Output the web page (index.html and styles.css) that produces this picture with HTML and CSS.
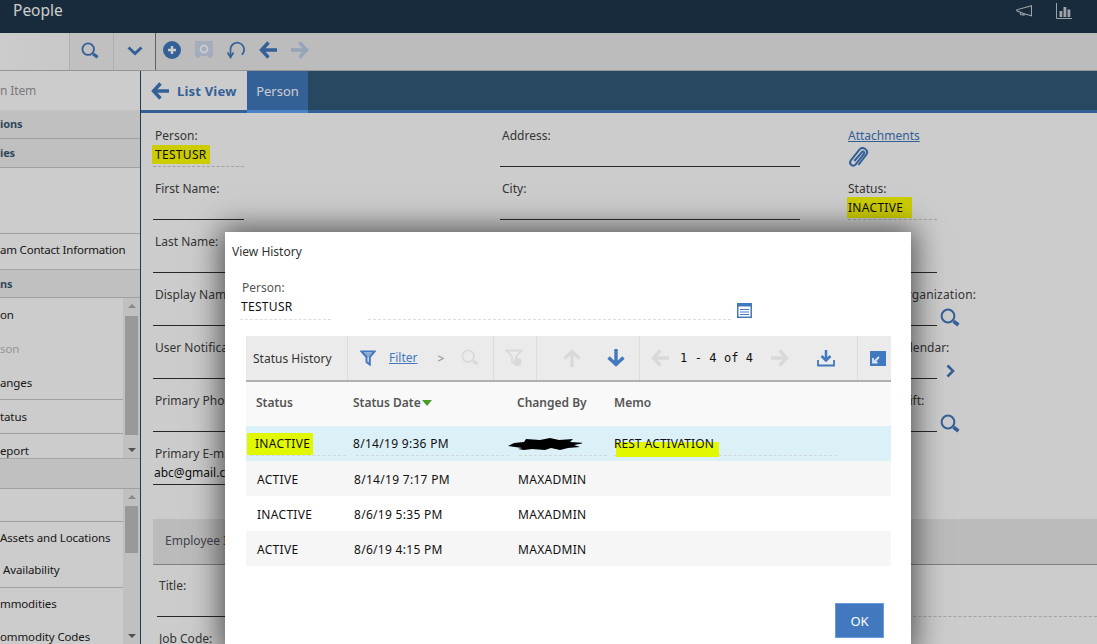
FILE: index.html
```html
<!DOCTYPE html>
<html lang="en">
<head>
<meta charset="utf-8">
<title>People</title>
<link rel="stylesheet" href="styles.css">
</head>
<body>
<svg class="defs" width="0" height="0" aria-hidden="true">
  <symbol id="i-search" viewBox="0 0 20 20"><circle cx="8" cy="8" r="6.400" fill="none" stroke="currentColor" stroke-width="2"/><path d="M13.500 13.300l5 3.700" fill="none" stroke="currentColor" stroke-width="3.600"/></symbol>
  <symbol id="i-left" viewBox="0 0 18 18"><path d="M9.500 1.500L2.500 9l7 7.500M3 9h15" fill="none" stroke="currentColor" stroke-width="3.400"/></symbol>
  <symbol id="i-right" viewBox="0 0 18 18"><path d="M8.500 1.500l7 7.500-7 7.500M15 9H0" fill="none" stroke="currentColor" stroke-width="3.400"/></symbol>
  <symbol id="i-up" viewBox="0 0 18 18"><path d="M1.500 9.500l7.500-7 7.500 7M9 3v15" fill="none" stroke="currentColor" stroke-width="3.400"/></symbol>
  <symbol id="i-down" viewBox="0 0 18 18"><path d="M1.500 8.500l7.500 7 7.500-7M9 15V0" fill="none" stroke="currentColor" stroke-width="3.400"/></symbol>
  <symbol id="i-filter" viewBox="0 0 16 16"><path d="M1.500 1.500h13L9.800 7v7.500L6.500 12V7z" fill="none" stroke="currentColor" stroke-width="2"/><path d="M4 3h8L9 7H7z" fill="currentColor" opacity=".55"/></symbol>
</svg>

<div class="page">
  <header class="topbar">
    <span class="app-title">People</span>
    <div class="top-icons">
      <svg class="top-icon" width="16" height="12" viewBox="0 0 16 12"><path d="M15.500.8v10L8 8.800.8 5.800v-1z M4 7l.5 2.500 3.500.6.300-2" fill="none" stroke="currentColor" stroke-width="1.100"/></svg>
      <svg class="top-icon" width="16" height="16" viewBox="0 0 16 16"><path d="M.5 0v15.500H16" fill="none" stroke="currentColor"/><path d="M3.500 8h2.800v6H3.500zM7.500 4h2.800v10H7.500zM11.500 6.500h2.800V14h-2.800z" fill="currentColor"/></svg>
    </div>
  </header>

  <div class="toolbar">
    <div class="tb-field"></div>
    <div class="tb-cell tb-search"><svg class="ic18"><use href="#i-search"/></svg></div>
    <div class="tb-cell tb-last"><svg width="16" height="10" viewBox="0 0 16 10" class="blue"><path d="M1.500 1.500L8 7.500l6.500-6" fill="none" stroke="currentColor" stroke-width="3"/></svg></div>
    <div class="tb-actions">
      <svg width="18" height="18" viewBox="0 0 18 18" class="blue"><circle cx="9" cy="9" r="9" fill="currentColor"/><path d="M9 5v8M5 9h8" stroke="#fff" stroke-width="2.400"/></svg>
      <svg width="18" height="18" viewBox="0 0 18 18" class="faded"><path d="M0 0h18v15l-2 2h-2l-1-2H5l-1 2H2l-2-2z" fill="currentColor"/><circle cx="9" cy="8" r="3.500" fill="none" stroke="#fff" stroke-width="1.800"/></svg>
      <svg width="18" height="18" viewBox="0 0 18 18" class="blue"><path d="M3.500 15V8.500a6.800 6.800 0 1 1 12.500 3.700c-.3.500-.7 1-1.200 1.400" fill="none" stroke="currentColor" stroke-width="1.700"/><path d="M.5 11.500l3 4.800 3-4.800" fill="none" stroke="currentColor" stroke-width="1.700"/></svg>
      <svg class="ic18 blue"><use href="#i-left"/></svg>
      <svg class="ic18 faded-arrow"><use href="#i-right"/></svg>
    </div>
  </div>

  <div class="main">
    <aside class="sidebar">
      <div class="side-top">n Item</div>
      <div class="band">ions</div>
      <div class="band">ies</div>
      <div class="side-plain">
        <div class="side-spacer"></div>
        <div class="side-row">am Contact Information</div>
      </div>
      <div class="band band-a">ns</div>
      <div class="side-scroll side-scroll-a">
        <ul class="side-list">
          <li class="row34">on</li>
          <li class="row34 disabled">son</li>
          <li class="row34 sep">anges</li>
          <li class="row34 sep">tatus</li>
          <li class="row34">eport</li>
        </ul>
        <div class="scrollbar">
          <span class="arrow-up"></span>
          <span class="thumb thumb-a"></span>
          <span class="arrow-down"></span>
        </div>
      </div>
      <div class="band band-b"></div>
      <div class="side-scroll side-scroll-b">
        <ul class="side-list">
          <li class="row33 sep"></li>
          <li class="row33">Assets and Locations</li>
          <li class="row33 sep indent">Availability</li>
          <li class="row33">mmodities</li>
          <li class="row33">ommodity Codes</li>
        </ul>
        <div class="scrollbar">
          <span class="arrow-up"></span>
          <span class="thumb thumb-b"></span>
          <span class="arrow-down"></span>
        </div>
      </div>
    </aside>

    <section class="content">
      <nav class="tabs">
        <a class="tab-list"><svg class="ic18 blue"><use href="#i-left"/></svg><span>List View</span></a>
        <a class="tab-person">Person</a>
      </nav>
      <div class="form">
        <div class="col col-1">
          <div class="field dashed"><label>Person:</label><div class="value"><mark>TESTUSR</mark></div></div>
          <div class="field"><label>First Name:</label><div class="value"></div></div>
          <div class="field"><label>Last Name:</label><div class="value"></div></div>
          <div class="field"><label>Display Name:</label><div class="value"></div></div>
          <div class="field"><label>User Notification:</label><div class="value"></div></div>
          <div class="field"><label>Primary Phone:</label><div class="value"></div></div>
          <div class="field"><label>Primary E-mail:</label><div class="value">abc@gmail.com</div></div>
        </div>
        <div class="col col-2">
          <div class="field"><label>Address:</label><div class="value"></div></div>
          <div class="field"><label>City:</label><div class="value"></div></div>
        </div>
        <div class="col col-3">
          <div class="attach">
            <a class="link">Attachments</a>
            <svg class="clip" width="20" height="20" viewBox="3 2 15 15"><path d="M7 12.500l5.500-6.500c1-1.200 2.600-.2 1.700 1.200L8 15c-2 2.400-5.500-.3-3.600-3l6.400-8c2.500-3 7.500.3 5.200 3.800L10 15.500" fill="none" stroke="currentColor" stroke-width="1.500"/></svg>
          </div>
          <div class="field dashed"><label>Status:</label><div class="value"><mark class="mark-status">INACTIVE</mark></div></div>
          <div class="field"><label>Type:</label><div class="value"></div></div>
          <div class="field with-icon"><label class="label-wide">Primary Organization:</label><div class="value"></div><svg class="field-icon"><use href="#i-search"/></svg></div>
          <div class="field with-icon"><label>Primary Calendar:</label><div class="value"></div><svg class="field-chev" width="9" height="14" viewBox="0 0 9 14"><path d="M1.500 1.500L7 7l-5.500 5.500" fill="none" stroke="currentColor" stroke-width="2.600"/></svg></div>
          <div class="field with-icon"><label>Primary Shift:</label><div class="value"></div><svg class="field-icon"><use href="#i-search"/></svg></div>
        </div>
      </div>
      <div class="employee">
        <div class="employee-band">Employee I</div>
        <div class="employee-body">
          <div class="employee-col">
            <div class="field"><label>Title:</label><div class="value"></div></div>
            <div class="field"><label>Job Code:</label><div class="value"></div></div>
          </div>
          <div class="employee-col">
            <div class="field dashed"><label></label><div class="value"></div></div>
          </div>
        </div>
      </div>
    </section>
  </div>

  <div class="scrim"></div>

  <div class="modal" role="dialog">
    <div class="modal-title">View History</div>
    <div class="modal-person">
      <div class="mp-field">
        <label>Person:</label>
        <div class="mp-value">TESTUSR</div>
      </div>
      <div class="mp-desc"></div>
      <svg class="cal" width="15" height="15" viewBox="0 0 15 15"><rect x=".75" y=".75" width="13.500" height="13.500" fill="#fff" stroke="#4178be" stroke-width="1.500"/><path d="M0 0h15v3.500H0z" fill="#4178be"/><path d="M3 6.500h9M3 9h9M3 11.500h9" stroke="#4178be"/></svg>
    </div>

    <div class="history">
      <div class="h-toolbar">
        <div class="ht-title">Status History</div>
        <div class="ht-filter">
          <svg class="ic16 blue"><use href="#i-filter"/></svg>
          <a class="link">Filter</a>
          <span class="ht-gt">&gt;</span>
          <svg class="ic18 off"><use href="#i-search"/></svg>
        </div>
        <div class="ht-clear">
          <svg width="18" height="18" viewBox="0 0 18 18" class="off"><path d="M1.500 1.500h15L11 7.500v8L7 13V7.500z" fill="none" stroke="currentColor" stroke-width="1.800"/><circle cx="12.500" cy="13" r="4" fill="currentColor"/></svg>
        </div>
        <div class="ht-sort">
          <svg class="ic18 off"><use href="#i-up"/></svg>
          <svg class="ic18 blue"><use href="#i-down"/></svg>
        </div>
        <div class="ht-page">
          <svg class="ic18 off"><use href="#i-left"/></svg>
          <span class="ht-count">1 - 4 of 4</span>
          <svg class="ic18 off"><use href="#i-right"/></svg>
          <svg class="ht-dl blue" width="18" height="18" viewBox="0 0 18 18"><path d="M9 1v10M4.500 7L9 11.500 13.500 7" fill="none" stroke="currentColor" stroke-width="2.500"/><path d="M1 11v5.500h16V11" fill="none" stroke="currentColor" stroke-width="1.800"/></svg>
        </div>
        <div class="ht-restore">
          <svg width="16" height="15" viewBox="0 0 16 15"><rect width="16" height="15" fill="#4178be"/><path d="M9 6L4 11M3 7v4.500h4.500" fill="none" stroke="#dbe6f4" stroke-width="1.800"/></svg>
        </div>
      </div>

      <div class="h-grid h-head">
        <div>Status</div>
        <div>Status Date<span class="sort-mark"></span></div>
        <div>Changed By</div>
        <div>Memo</div>
      </div>
      <div class="h-grid h-row h-selected">
        <div class="c-dash"><mark class="hl-bright">INACTIVE</mark></div>
        <div class="c-dash">8/14/19 9:36 PM</div>
        <div class="c-dash"><svg class="redact" width="74" height="15" viewBox="0 0 74 15"><path d="M0 10l6-3 10-1 2-3 14 1 10-2 9 2 14-1-3 3 14 1-10 2 6 2-12 1-8 2-9-2-6 2-13-1-8 1-6-1 4-1z" fill="#000"/></svg></div>
        <div class="c-dash c-memo"><mark class="hl-low">REST ACTIVATION</mark></div>
      </div>
      <div class="h-grid h-row h-alt h-plain">
        <div>ACTIVE</div><div>8/14/19 7:17 PM</div><div>MAXADMIN</div><div></div>
      </div>
      <div class="h-grid h-row h-plain">
        <div>INACTIVE</div><div>8/6/19 5:35 PM</div><div>MAXADMIN</div><div></div>
      </div>
      <div class="h-grid h-row h-alt h-plain">
        <div>ACTIVE</div><div>8/6/19 4:15 PM</div><div>MAXADMIN</div><div></div>
      </div>
    </div>

    <div class="modal-foot"><button class="ok" type="button">OK</button></div>
  </div>
</div>
</body>
</html>
```
FILE: styles.css
```css
* { box-sizing: border-box; }
html, body { margin: 0; padding: 0; }
body { font-family: "Noto Sans", "Open Sans", sans-serif; font-size: 12px; color: #222; background: #fff; }
.defs { position: absolute; }
.page { position: relative; width: 1097px; height: 644px; overflow: hidden; display: flex; flex-direction: column; }
.ic18 { width: 18px; height: 18px; }
.ic16 { width: 16px; height: 16px; }
.blue, .ic18, .clip, .field-chev, .field-icon { color: #4178be; }
.off.off { color: #d9d9d9; }
.faded { color: #ccd9ee; }
.ic18.faded-arrow { color: #b9cde8; }

/* top bar */
.topbar { height: 33px; flex: none; background: #1e364b; display: flex; align-items: flex-start; justify-content: space-between; padding: 0 25px 0 13px; }
.app-title { font-size: 15.500px; line-height: 20px; color: #fff; }
.top-icons { display: flex; gap: 24px; align-items: center; height: 17px; margin-top: 2px; }
.top-icon { color: #c8cdd2; }

/* tool bar */
.toolbar { height: 38px; flex: none; background: #ebebeb; border-bottom: 1px solid #bbb; display: flex; align-items: stretch; }
.tb-field { width: 69px; background: linear-gradient(90deg, #fff, #fafafa); }
.tb-cell { width: 44px; display: flex; align-items: center; justify-content: center; background: #f0f0f0; border-left: 1px solid #dadada; padding-bottom: 2px; }
.tb-search { padding-right: 4px; }
.tb-last { width: 43px; border-right: 1px solid #7a7a7a; }
.tb-actions { display: flex; align-items: center; gap: 14px; padding: 0 0 3px 7px; }

/* main */
.main { flex: 1; display: flex; min-height: 0; }
.sidebar { width: 141px; flex: none; border-right: 1px solid #2a4a66; display: flex; flex-direction: column; overflow: hidden; line-height: 16px; font-size: 11.500px; letter-spacing: -.12px; }
.side-top { height: 40px; display: flex; align-items: center; color: #999; font-size: 12px; }
.band { height: 29px; flex: none; background: #f0f0f0; border-bottom: 1px solid #c8c8c8; display: flex; align-items: center; font-weight: 700; color: #3d5a74; font-size: 11px; }
.side-plain { height: 101px; flex: none; }
.side-spacer { height: 66px; border-bottom: 1px solid #c8c8c8; }
.side-row { height: 32px; display: flex; align-items: center; letter-spacing: -.2px; }
.band-a { height: 29px; border-top: 1px solid #d0d0d0; }
.band-b { height: 31px; border-top: 1px solid #d0d0d0; }
.side-scroll { display: flex; flex: none; overflow: hidden; }
.side-scroll-a { height: 160px; }
.side-scroll-b { height: 155px; }
.side-list { list-style: none; margin: 0; padding: 0; flex: 1; min-width: 0; }
.side-list li { display: flex; align-items: center; white-space: nowrap; }
.row34 { height: 34px; }
.row33 { height: 33px; padding-bottom: 2px; }
.sep { border-bottom: 1px solid #c8c8c8; }
.indent { padding-left: 3px; }
.disabled { color: #bbb; }
.scrollbar { width: 17px; flex: none; background: #f0f0f0; position: relative; display: flex; flex-direction: column; align-items: center; padding: 6px 0; }
.arrow-up, .arrow-down { flex: none; width: 0; height: 0; border-left: 4px solid transparent; border-right: 4px solid transparent; }
.arrow-up { border-bottom: 4px solid #aaa; }
.arrow-down { border-top: 4px solid #666; margin-top: auto; }
.thumb { width: 13px; background: #c0c0c0; flex: none; }
.thumb-a { height: 119px; margin-top: 8px; }
.thumb-b { height: 47px; margin-top: 7px; }

/* content */
.content { flex: 1; min-width: 0; display: flex; flex-direction: column; }
.tabs { height: 42px; flex: none; background: #325a7a; border-bottom: 3px solid #4178be; display: flex; }
.tab-list { width: 106px; background: #fff; margin-bottom: -3px; border-bottom: 3px solid #4178be; display: flex; align-items: center; gap: 8px; padding: 0 0 0 10px; color: #4178be; font-weight: 700; font-size: 13px; letter-spacing: .2px; }
.tab-person { width: 61px; background: #4178be; margin-bottom: -3px; border-bottom: 3px solid #5da5f5; display: flex; align-items: center; justify-content: center; color: #fff; font-size: 13px; }
.form { display: flex; padding: 15px 0 0 12px; height: 406px; flex: none; }
.col { display: flex; flex-direction: column; }
.col-1 { width: 347px; }
.col-1 .value { width: 91px; }
.col-2 { width: 348px; }
.col-2 .value { width: 300px; }
.col-3 .value { width: 89px; }
.field { height: 53px; flex: none; position: relative; }
.field label { display: block; height: 17px; line-height: 16px; padding-left: 2px; color: #444; white-space: nowrap; }
.col-3 .field label { padding-left: 0; }
.col-3 .field .label-wide { letter-spacing: .2px; }
.value { height: 22px; line-height: 20px; border-bottom: 1px solid #333; color: #111; white-space: nowrap; padding-left: 1px; overflow: visible; }
.dashed .value { border-bottom: 1px dashed #ccc; }
mark { background: #ff0; color: #111; padding: 1px 3px; margin-left: -2px; letter-spacing: .3px; }
.col-3 .value { padding-left: 0; }
.mark-status { margin-left: -1px; padding: 2px 9px 2px 1px; }
.attach { height: 53px; flex: none; display: flex; flex-direction: column; align-items: flex-start; gap: 3px; }
.link { color: #4178be; text-decoration: underline; line-height: 16px; }
.clip { margin-left: 1px; }
.field-icon { position: absolute; left: 92px; top: 21px; width: 20px; height: 20px; }
.field-chev { position: absolute; left: 98px; top: 24px; }
.employee { padding-left: 12px; }
.employee-band { height: 46px; background: #eaeaea; border-bottom: 1px solid #9f9f9f; display: flex; align-items: center; padding: 0 0 2px 12px; color: #556; }
.employee-body { padding: 13px 0 0 4px; display: flex; gap: 30px; }
.employee-col { flex: none; width: 310px; }
.employee-col + .employee-col { width: 620px; }
.employee-col .value { width: 100%; }

/* overlay */
.scrim { position: absolute; inset: 0; background: rgba(0, 0, 0, .2); }
.modal { position: absolute; left: 225px; top: 232px; width: 686px; height: 420px; background: #fff; box-shadow: 0 0 28px 4px rgba(0, 0, 0, .6); padding: 0 20px 0 21px; }
.modal-title { height: 39px; line-height: 39px; margin-left: -14px; color: #333; }
.modal-person { display: flex; align-items: flex-end; height: 49px; margin-left: -6px; }
.mp-field { width: 91px; border-bottom: 1px dashed #ddd; height: 42px; }
.mp-field label { display: block; height: 19px; line-height: 19px; padding-left: 2px; color: #555; }
.mp-value { line-height: 20px; padding-left: 1px; color: #111; letter-spacing: .3px; }
.mp-desc { width: 363px; margin-left: 37px; border-bottom: 1px dashed #ddd; }
.cal { margin: 0 0 0 6px; position: relative; top: -2px; }
.history { margin-top: 16px; width: 645px; }
.h-toolbar { height: 46px; background: #ebebeb; border-bottom: 2px solid #b0b0b0; display: flex; align-items: stretch; }
.h-toolbar > div { display: flex; align-items: center; border-right: 1px solid #dcdcdc; }
.ht-title { width: 102px; padding-left: 7px; color: #333; }
.ht-filter { width: 146px; padding-left: 12px; gap: 13px; }
.ht-gt { color: #888; margin: 0 4px 0 7px; }
.ht-clear { width: 43px; padding-left: 11px; }
.ht-sort { width: 103px; padding-left: 26px; gap: 26px; }
.ht-page { width: 218px; padding-left: 11px; }
.ht-count { font-family: "DejaVu Sans Mono", "Liberation Mono", monospace; font-size: 12px; color: #111; margin: 0 18px 0 11px; white-space: nowrap; word-spacing: .2px; }
.ht-dl { margin-left: 28px; }
.h-toolbar > .ht-restore { border-right: 0; padding-left: 12px; }
.h-grid { display: grid; grid-template-columns: 105px 163px 98px 1fr; align-items: center; }
.h-grid > div { padding-left: 2px; white-space: nowrap; }
.h-head { height: 44px; padding-bottom: 3px; background: #f9f9f9; font-weight: 600; color: #555; }
.h-head > div:first-child { padding-left: 10px; }
.h-head > div:nth-child(3) { padding-left: 3px; }
.h-row { height: 35px; color: #111; letter-spacing: .3px; }
.h-plain { padding-top: 1px; }
.h-plain > div { padding-left: 3px; }
.h-plain > div:first-child { padding-left: 11px; }
.h-plain > div:nth-child(3) { padding-left: 4px; }
.h-alt { background: #f6f6f6; }
.h-selected { background: #dcf0f8; align-items: stretch; }
.h-selected > div { display: flex; align-items: center; position: relative; }
.h-selected > .c-dash::after { content: ""; position: absolute; left: 5px; right: 5px; bottom: 5px; border-bottom: 1px dashed #d0d8dc; }
.h-selected > .c-memo::after { left: 1px; right: 54px; }
.h-selected > div:first-child { padding-left: 9px; }
.sort-mark { display: inline-block; width: 0; height: 0; margin-left: 1px; vertical-align: 1px; border-left: 5px solid transparent; border-right: 5px solid transparent; border-top: 6px solid #4c9a2a; }
.hl-bright { background: #e2f800; padding: 2px 3px 3px 8px; margin-left: -8px; position: relative; z-index: 1; }
.hl-low { background: linear-gradient(180deg, transparent 30%, #e2f800 30%) no-repeat 2px 0; padding: 0 5px 5px 0; margin: 5px 0 0 0; letter-spacing: .05px; position: relative; z-index: 1; }
.redact { display: block; margin-left: -8px; position: relative; z-index: 1; }
.modal-foot { display: flex; justify-content: flex-end; padding: 37px 7px 0 0; }
.ok { width: 49px; height: 35px; background: #4178be; color: #fff; border: 1px solid #6a9be0; font: inherit; font-size: 13px; padding: 0; }
```
